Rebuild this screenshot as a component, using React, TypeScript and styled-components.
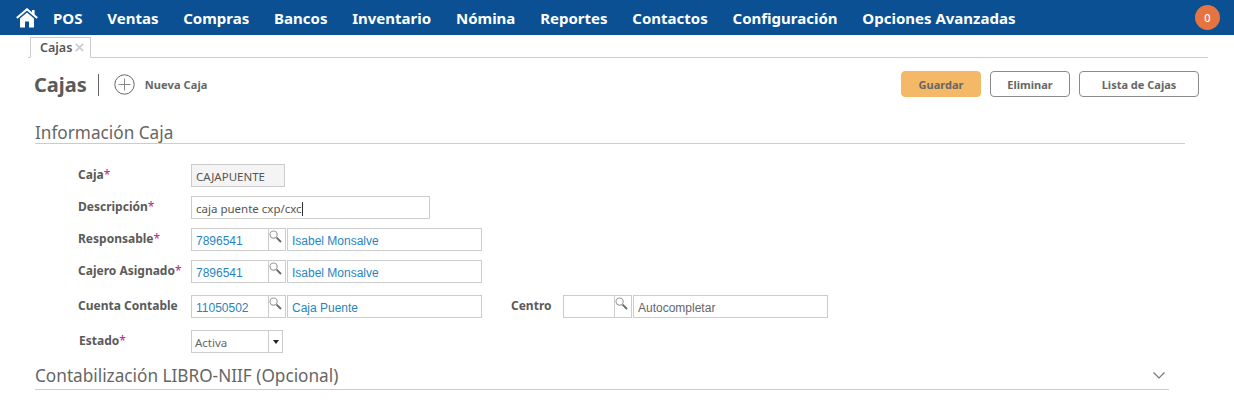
import React from "react";
import styled, { createGlobalStyle } from "styled-components";

const GlobalStyle = createGlobalStyle`
  html, body {
    margin: 0;
    padding: 0;
    background: #fff;
    font-family: "Noto Sans", "DejaVu Sans", sans-serif;
  }
`;

const Page = styled.div`
  width: 1234px;
  height: 416px;
  overflow: hidden;
  background: #fff;
`;

const NavBar = styled.nav`
  height: 35px;
  display: flex;
  align-items: center;
  background: #0a5092;
  padding: 0 14px;
`;

const HomeLink = styled.a`
  display: flex;
  width: 25px;
  padding-left: 2px;
  box-sizing: border-box;
  margin-right: 14px;
`;

const NavItem = styled.a`
  color: #fff;
  font: 700 15px "Noto Sans", sans-serif;
  margin-right: 24.8px;
  white-space: nowrap;
`;

const Badge = styled.span`
  margin-left: auto;
  width: 25px;
  height: 25px;
  border-radius: 50%;
  background: #e57440;
  color: #fff;
  font: 500 11px "Noto Sans", sans-serif;
  display: flex;
  align-items: center;
  justify-content: center;
`;

const TabStrip = styled.div`
  margin: 2px 26px 0 28px;
  height: 20px;
  border-bottom: 1px solid #ccc;
  display: flex;
`;

const Tab = styled.div`
  height: 21px;
  margin-left: 2px;
  width: 61px;
  box-sizing: border-box;
  border: 1px solid #ccc;
  border-bottom: 1px solid #fff;
  display: flex;
  align-items: center;
  padding-left: 9px;
  gap: 3px;
  font: 600 12.5px "Noto Sans", sans-serif;
  color: #555;
`;

const TitleBar = styled.div`
  display: flex;
  align-items: center;
  margin-top: 13px;
  padding: 0 35px 0 34px;
  height: 27px;
`;

const PageTitle = styled.h1`
  margin: 0;
  padding-right: 11px;
  border-right: 1px solid #666;
  font: 700 20px/22px "Noto Sans", sans-serif;
  color: #5a5a5a;
`;

const NewLink = styled.a`
  display: flex;
  align-items: center;
  gap: 10px;
  margin-left: 15px;
  font: 700 11px "Noto Sans", sans-serif;
  letter-spacing: 0.1px;
  color: #666;
`;

const Actions = styled.div`
  margin-left: auto;
  align-self: flex-start;
  display: flex;
  gap: 9px;
`;

const ActionButton = styled.button<{ $primary?: boolean; $width: number }>`
  width: ${(p) => p.$width}px;
  height: 26px;
  box-sizing: border-box;
  border-radius: 4px;
  border: 1px solid ${(p) => (p.$primary ? "#f3b966" : "#8a8a8a")};
  background: ${(p) => (p.$primary ? "#f3b966" : "#fff")};
  color: #666;
  font: 700 11px "Noto Sans", sans-serif;
  padding: 0;
`;

const SectionTitle = styled.div<{ $end: number; $top: number; $height: number }>`
  margin: ${(p) => p.$top}px ${(p) => 1234 - p.$end}px 0 35px;
  display: flex;
  align-items: center;
  justify-content: space-between;
  height: ${(p) => p.$height}px;
  border-bottom: 1px solid #ccc;
  font: 400 17.2px "Noto Sans", sans-serif;
  color: #666;
`;

const Form = styled.div`
  margin: 20px 0 0 78px;
  display: flex;
  flex-direction: column;
`;

const Row = styled.div<{ $gap: number }>`
  display: flex;
  align-items: center;
  height: 23px;
  margin-bottom: ${(p) => p.$gap}px;
`;

const Label = styled.label<{ $width?: number; $indent?: number }>`
  width: ${(p) => p.$width ?? 113}px;
  padding-left: ${(p) => p.$indent ?? 0}px;
  box-sizing: border-box;
  margin-top: -2px;
  font: 700 12px "Noto Sans", sans-serif;
  color: #5a5a5a;
  white-space: nowrap;
`;

const Required = styled.span`
  color: #b5267c;
  font-weight: 400;
`;

const Field = styled.div<{ $width: number; $off?: boolean; $blue?: boolean; $muted?: boolean; $small?: boolean }>`
  width: ${(p) => p.$width}px;
  height: 23px;
  box-sizing: border-box;
  border: 1px solid #ccc;
  background: ${(p) => (p.$off ? "#f4f4f4" : "#fff")};
  color: ${(p) => (p.$blue ? "#1f86c0" : p.$muted ? "#666" : "#555")};
  font: 400 ${(p) => (p.$small ? '12px / 24px "Liberation Sans"' : '11.5px / 23px "Noto Sans"')}, sans-serif;
  padding-left: 4px;
  white-space: nowrap;
  overflow: hidden;
`;

const Caret = styled.span`
  display: inline-block;
  width: 1px;
  height: 14px;
  background: #333;
  vertical-align: -3px;
`;

const LookupBox = styled.div`
  display: flex;
  margin-right: 1px;
`;

const LookupInput = styled(Field)`
  border-right: none;
`;

const LookupButton = styled.span`
  width: 18px;
  height: 23px;
  box-sizing: border-box;
  border: 1px solid #ccc;
  display: flex;
  padding-top: 1px;
`;

const SelectInput = styled(LookupInput)`
  padding-left: 3px;
  color: #666;
`;

const SelectButton = styled(LookupButton)`
  width: 15px;
  padding-top: 9px;
  justify-content: center;
`;

const SelectArrow = styled.i`
  width: 0;
  height: 0;
  border-left: 3px solid transparent;
  border-right: 3px solid transparent;
  border-top: 4px solid #222;
`;

const ChevronWrap = styled.span`
  display: flex;
  margin-right: 4px;
`;

const Home = () => (
  <svg width="22" height="20" viewBox="0 0 22 20">
    <path d="M4 10.5 11 4.5 18 10.5V19.5H13V13.5H9V19.5H4Z" fill="#fff" />
    <path d="M.8 10 11 1.3 21.2 10" fill="none" stroke="#fff" strokeWidth="2.1" />
    <rect x="16" y="2" width="2.6" height="4.5" fill="#fff" />
  </svg>
);

const Close = () => (
  <svg width="9" height="9" viewBox="0 0 9 9" stroke="#ccc" strokeWidth="1.7">
    <path d="M.8.8 8.2 8.2M8.2.8.8 8.2" />
  </svg>
);

const Plus = () => (
  <svg width="21" height="21" viewBox="0 0 21 21" fill="none" stroke="#666">
    <circle cx="10.5" cy="10.5" r="9.7" />
    <path d="M10.5 4.5V16.5M4.5 10.5H16.5" stroke="#888" />
  </svg>
);

const Search = () => (
  <svg width="13" height="13" viewBox="0 0 13 13" fill="none">
    <circle cx="4.6" cy="4.6" r="3.6" stroke="#999" strokeWidth="1.1" />
    <path d="M7.6 7.6 12 12" stroke="#666" strokeWidth="1.8" />
  </svg>
);

const Chevron = () => (
  <svg width="12" height="7" viewBox="0 0 12 7" fill="none" stroke="#777" strokeWidth="1.2">
    <path d="M.5.5 6 6 11.5.5" />
  </svg>
);

const menu = [
  "POS",
  "Ventas",
  "Compras",
  "Bancos",
  "Inventario",
  "Nómina",
  "Reportes",
  "Contactos",
  "Configuración",
  "Opciones Avanzadas",
];

const Lookup: React.FC<{ code?: string; name: string; blue?: boolean; codeWidth?: number }> = ({
  code,
  name,
  blue = true,
  codeWidth = 77,
}) => (
  <>
    <LookupBox>
      <LookupInput $width={codeWidth} $blue $small>
        {code}
      </LookupInput>
      <LookupButton>
        <Search />
      </LookupButton>
    </LookupBox>
    <Field $width={195} $blue={blue} $muted={!blue} $small>
      {name}
    </Field>
  </>
);

export default function App() {
  return (
    <Page>
      <GlobalStyle />
      <NavBar>
        <HomeLink>
          <Home />
        </HomeLink>
        {menu.map((item) => (
          <NavItem key={item}>{item}</NavItem>
        ))}
        <Badge>0</Badge>
      </NavBar>
      <TabStrip>
        <Tab>
          Cajas <Close />
        </Tab>
      </TabStrip>
      <TitleBar>
        <PageTitle>Cajas</PageTitle>
        <NewLink>
          <Plus />
          Nueva Caja
        </NewLink>
        <Actions>
          <ActionButton $primary $width={80}>
            Guardar
          </ActionButton>
          <ActionButton $width={80}>Eliminar</ActionButton>
          <ActionButton $width={120}>Lista de Cajas</ActionButton>
        </Actions>
      </TitleBar>
      <SectionTitle $end={1185} $top={23} $height={22}>
        Información Caja
      </SectionTitle>
      <Form>
        <Row $gap={9}>
          <Label>
            Caja<Required>*</Required>
          </Label>
          <Field $width={94} $off>
            CAJAPUENTE
          </Field>
        </Row>
        <Row $gap={9}>
          <Label>
            Descripción<Required>*</Required>
          </Label>
          <Field $width={239}>
            caja puente cxp/cxc
            <Caret />
          </Field>
        </Row>
        <Row $gap={9}>
          <Label>
            Responsable<Required>*</Required>
          </Label>
          <Lookup code="7896541" name="Isabel Monsalve" />
        </Row>
        <Row $gap={12}>
          <Label>
            Cajero Asignado<Required>*</Required>
          </Label>
          <Lookup code="7896541" name="Isabel Monsalve" />
        </Row>
        <Row $gap={12}>
          <Label>Cuenta Contable</Label>
          <Lookup code="11050502" name="Caja Puente" />
          <Label $width={81} $indent={29}>
            Centro
          </Label>
          <Lookup name="Autocompletar" blue={false} codeWidth={51} />
        </Row>
        <Row $gap={0}>
          <Label $indent={1}>
            Estado<Required>*</Required>
          </Label>
          <SelectInput $width={77}>Activa</SelectInput>
          <SelectButton>
            <SelectArrow />
          </SelectButton>
        </Row>
      </Form>
      <SectionTitle $end={1169} $top={8} $height={28}>
        Contabilización LIBRO-NIIF (Opcional)
        <ChevronWrap>
          <Chevron />
        </ChevronWrap>
      </SectionTitle>
    </Page>
  );
}
